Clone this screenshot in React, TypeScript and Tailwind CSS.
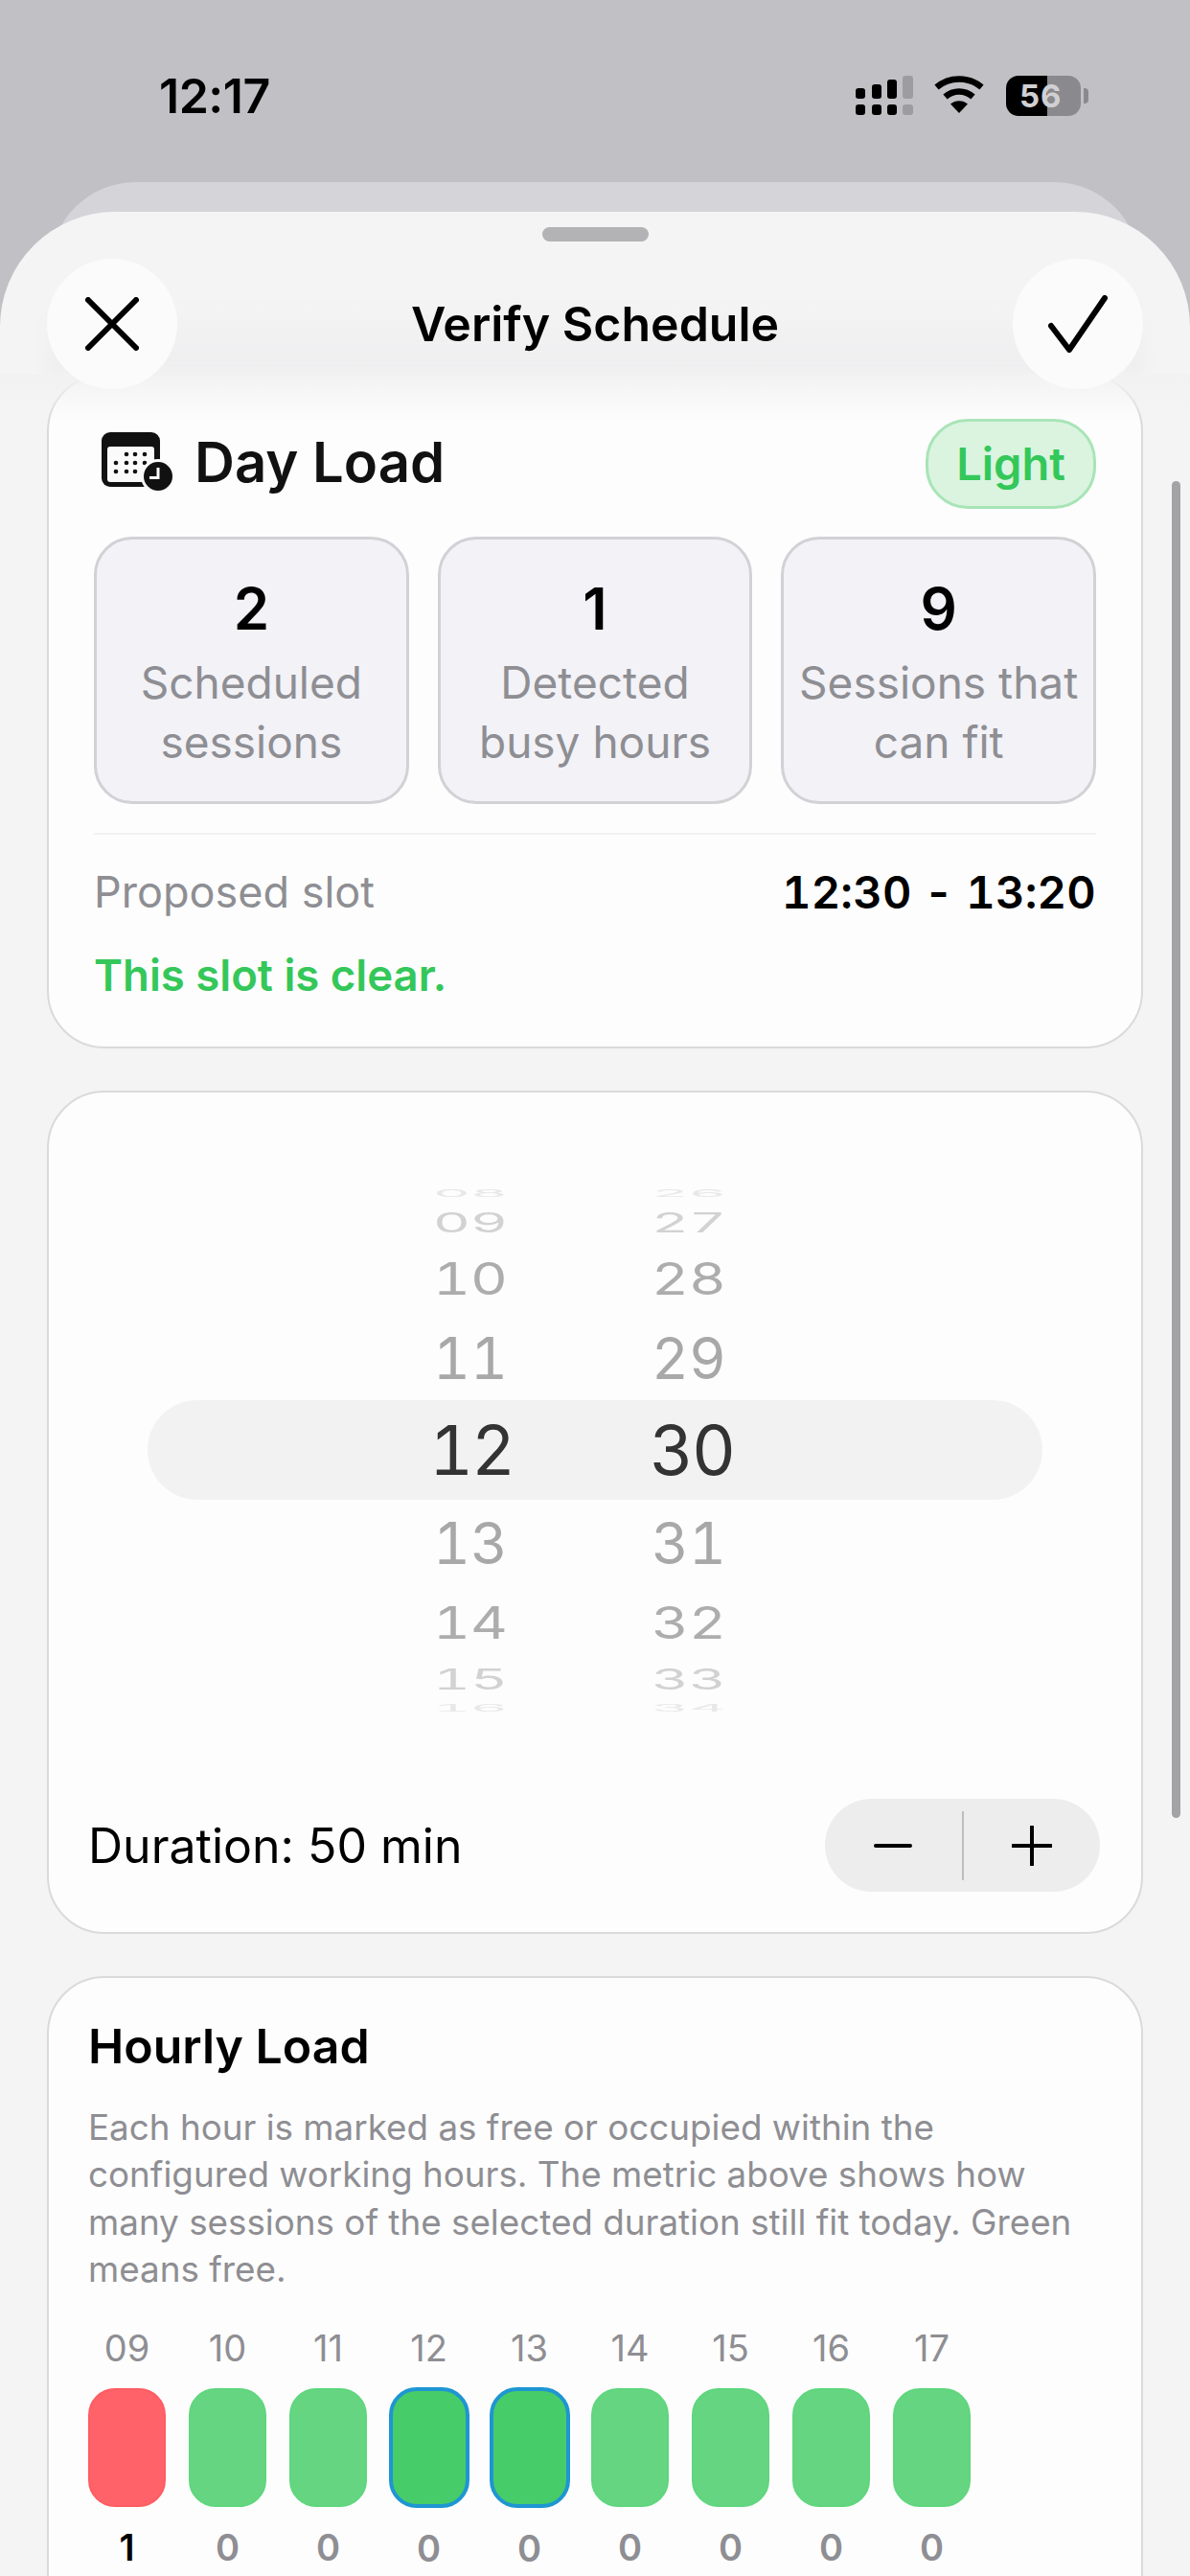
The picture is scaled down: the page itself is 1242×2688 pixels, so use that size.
import React from "react";

const hours = [
  { h: "09", c: "1", kind: "busy" },
  { h: "10", c: "0", kind: "free" },
  { h: "11", c: "0", kind: "free" },
  { h: "12", c: "0", kind: "sel" },
  { h: "13", c: "0", kind: "sel" },
  { h: "14", c: "0", kind: "free" },
  { h: "15", c: "0", kind: "free" },
  { h: "16", c: "0", kind: "free" },
  { h: "17", c: "0", kind: "free" },
];

function Signal() {
  return (
    <svg width="62" height="42" viewBox="0 0 62 42" className="block">
      <g fill="#000">
        <rect x="0" y="13" width="10" height="11" rx="3" />
        <rect x="17" y="9" width="10" height="15" rx="3" />
        <rect x="33" y="4" width="10" height="20" rx="3" />
        <rect x="0" y="30" width="10" height="11" rx="3" />
        <rect x="17" y="30" width="10" height="11" rx="3" />
        <rect x="33" y="30" width="10" height="11" rx="3" />
      </g>
      <g fill="#9d9da0">
        <rect x="49" y="0" width="11" height="24" rx="3" />
        <rect x="49" y="30" width="11" height="11" rx="3" />
      </g>
    </svg>
  );
}

function Wifi() {
  return (
    <svg width="52" height="40" viewBox="0 0 52 40" className="block">
      <path d="M2.5 12 C16 0.5 36 0.5 49.5 12" fill="none" stroke="#000" strokeWidth="6.5" />
      <path d="M11.5 22 C20 14.5 32 14.5 40.5 22" fill="none" stroke="#000" strokeWidth="6.5" />
      <path d="M17 29.5 C22 25 30 25 35 29.5 L26 39 Z" fill="#000" />
    </svg>
  );
}

function CalendarClock() {
  return (
    <svg width="76" height="64" viewBox="0 0 76 64" className="mt-[2px] block shrink-0">
      <rect x="0" y="0" width="61" height="57" rx="9" fill="#111" />
      <rect x="6" y="15" width="49" height="37" rx="3" fill="#fafafa" />
      <g fill="#111">
        <circle cx="26" cy="23" r="2.3" />
        <circle cx="35" cy="23" r="2.3" />
        <circle cx="45" cy="23" r="2.3" />
        <circle cx="15" cy="32" r="2.3" />
        <circle cx="26" cy="32" r="2.3" />
        <circle cx="35" cy="32" r="2.3" />
        <circle cx="45" cy="32" r="2.3" />
        <circle cx="15" cy="41" r="2.3" />
        <circle cx="26" cy="41" r="2.3" />
        <circle cx="35" cy="41" r="2.3" />
      </g>
      <circle cx="59" cy="46" r="18" fill="#fafafa" />
      <circle cx="59" cy="46" r="15" fill="#111" />
      <path d="M59 37 V47.5 H50" fill="none" stroke="#fff" strokeWidth="3" />
    </svg>
  );
}

function Stat({ n, a, b }: { n: string; a: string; b: string }) {
  return (
    <div className="flex h-[279px] flex-col items-center rounded-[40px] border-[3px] border-[#d1d1d6] bg-[#f2f2f7] pt-[36px]">
      <div className="text-[60px] font-semibold leading-[72px] text-black">{n}</div>
      <div className="mt-[10px] text-center text-[46px] leading-[62px] text-[#8e8e93]">
        {a}
        <br />
        {b}
      </div>
    </div>
  );
}

function PickRow({
  a,
  b,
  h,
  size,
  color,
  scale,
  active,
}: {
  a: string;
  b: string;
  h: string;
  size: string;
  color: string;
  scale: string;
  active?: boolean;
}) {
  return (
    <div className={`flex items-center ${h} ${active ? "my-[7px] rounded-[52px] bg-[#f2f2f2]" : ""}`}>
      <span className={`leading-none tabular-nums ${active ? "ml-[294px] w-[230px] tracking-[-2px]" : "ml-[298px] w-[228px]"} ${size} ${color} ${scale}`}>{a}</span>
      <span className={`leading-none tabular-nums ${active ? "tracking-[-2px]" : ""} ${size} ${color} ${scale}`}>{b}</span>
    </div>
  );
}

export default function App() {
  return (
    <div className="relative h-[2688px] w-[1242px] overflow-hidden bg-[#c1c0c5] font-['Inter','Liberation_Sans',sans-serif]">
      {/* Status bar */}
      <div className="flex h-[190px] items-start justify-between pl-[166px] pr-[114px] pt-[72px]">
        <div className="text-[50px] font-semibold leading-[56px] tracking-[-0.5px] text-black">12:17</div>
        <div className="flex items-start pt-[7px]">
          <Signal />
          <div className="ml-[20px]">
            <Wifi />
          </div>
          <div className="relative ml-[23px] flex h-[42px] w-[78px]">
            <div className="h-full w-[43px] rounded-l-[13px] bg-black" />
            <div className="h-full w-[35px] rounded-r-[13px] bg-[#8a8a8e]" />
            <div className="absolute left-[14px] top-0 text-[33px] font-bold leading-[42px] tracking-[1px] text-[#d0d0d2]">56</div>
            <div className="absolute left-[81px] top-[13px] h-[16px] w-[5px] rounded-r-[4px] bg-[#8a8a8e]" />
          </div>
        </div>
      </div>

      {/* Sheet behind */}
      <div className="mx-[52px] -mb-[89px] h-[120px] rounded-t-[90px] bg-[#d5d4d9]" />

      {/* Front sheet */}
      <div className="relative h-[2467px] rounded-t-[120px] bg-[#f4f4f5]">
        <div className="flex justify-center pt-[16px]">
          <div className="h-[15px] w-[111px] rounded-full bg-[#b3b3b5]" />
        </div>

        {/* Header shade */}
        <div className="absolute left-[48px] right-[48px] top-[90px] h-[79px] bg-gradient-to-b from-transparent to-[#eeeeef] blur-[6px]" />

        {/* Header */}
        <div className="relative z-10 mt-[18px] flex items-center justify-between px-[49px]">
          <div className="flex h-[136px] w-[136px] items-center justify-center rounded-full bg-[#fbfbfc]">
            <svg width="56" height="56" viewBox="0 0 56 56">
              <path d="M3 3 L53 53 M53 3 L3 53" stroke="#000" strokeWidth="6" strokeLinecap="round" />
            </svg>
          </div>
          <div className="text-[50px] font-semibold leading-[60px] text-black">Verify Schedule</div>
          <div className="flex h-[136px] w-[136px] items-center justify-center rounded-full bg-[#fbfbfc]">
            <svg width="62" height="60" viewBox="0 0 62 60">
              <path d="M3 32 L22 57 L59 3" fill="none" stroke="#000" strokeWidth="6" strokeLinecap="round" strokeLinejoin="round" />
            </svg>
          </div>
        </div>
        <div className="absolute left-0 right-0 top-[169px] z-[5] h-[50px] bg-gradient-to-b from-[#f2f2f3] to-transparent" />

        {/* Body */}
        <div className="relative -mt-[16px] flex flex-col gap-[44px] px-[49px]">
          {/* Day Load */}
          <div className="h-[704px] rounded-[60px] border-[2px] border-[#dadada] bg-[#fdfdfd] pl-[47px] pr-[47px] pt-[45px]">
            <div className="flex h-[94px] items-start justify-between">
              <div className="ml-[8px] flex items-center pt-[9px]">
                <CalendarClock />
                <div className="ml-[21px] text-[58px] font-semibold leading-[72px] text-[#111]">Day Load</div>
              </div>
              <div className="flex h-[94px] w-[178px] items-center justify-center rounded-[44px] border-[3px] border-[#a8e4b6] bg-[#daf4e0] text-[47px] font-semibold text-[#34c759]">
                Light
              </div>
            </div>
            <div className="mt-[29px] grid grid-cols-3 gap-[30px]">
              <Stat n="2" a="Scheduled" b="sessions" />
              <Stat n="1" a="Detected" b="busy hours" />
              <Stat n="9" a="Sessions that" b="can fit" />
            </div>
            <div className="mt-[30px] h-[2px] bg-[#f1f1f1]" />
            <div className="mt-[31px] flex items-center justify-between">
              <div className="text-[45px] leading-[58px] text-[#8e8e93]">Proposed slot</div>
              <div className="text-[47px] font-semibold leading-[58px] tracking-[0.3px] text-black tabular-nums">12:30 - 13:20</div>
            </div>
            <div className="mt-[29px] text-[45.5px] font-semibold leading-[58px] text-[#34c759]">This slot is clear.</div>
          </div>

          {/* Picker */}
          <div className="h-[880px] rounded-[60px] border-[2px] border-[#dadada] bg-[#fdfdfd] pt-[90px]">
            <div className="mx-[103px]">
              <PickRow a="08" b="26" h="h-[30px]" size="text-[60px]" color="text-[#e8e8e8]" scale="scale-y-[0.18]" />
              <PickRow a="09" b="27" h="h-[29px]" size="text-[60px]" color="text-[#d2d2d2]" scale="scale-y-[0.48]" />
              <PickRow a="10" b="28" h="h-[90px]" size="text-[60px]" color="text-[#adadad]" scale="scale-y-[0.78]" />
              <PickRow a="11" b="29" h="h-[75px]" size="text-[60px]" color="text-[#a8a8a8]" scale="scale-y-100" />
              <PickRow a="12" b="30" h="h-[104px]" size="text-[71px]" color="text-[#333333]" scale="scale-y-100" active />
              <PickRow a="13" b="31" h="h-[76px]" size="text-[60px]" color="text-[#a8a8a8]" scale="scale-y-100" />
              <PickRow a="14" b="32" h="h-[90px]" size="text-[60px]" color="text-[#adadad]" scale="scale-y-[0.78]" />
              <PickRow a="15" b="33" h="h-[28px]" size="text-[60px]" color="text-[#d2d2d2]" scale="scale-y-[0.5]" />
              <PickRow a="16" b="34" h="h-[31px]" size="text-[60px]" color="text-[#e8e8e8]" scale="scale-y-[0.16]" />
            </div>
            <div className="mt-[80px] flex items-center justify-between pl-[41px] pr-[43px]">
              <div className="text-[50px] leading-[60px] text-black">Duration: 50 min</div>
              <div className="flex h-[97px] w-[287px] items-center rounded-full bg-[#ededed]">
                <div className="flex flex-1 items-center justify-center">
                  <div className="h-[4px] w-[40px] rounded-full bg-black" />
                </div>
                <div className="h-[72px] w-[2px] bg-[#bdbdbd]" />
                <div className="flex flex-1 items-center justify-center">
                  <svg width="42" height="42" viewBox="0 0 42 42">
                    <path d="M21 1 V41 M1 21 H41" stroke="#000" strokeWidth="4" strokeLinecap="round" />
                  </svg>
                </div>
              </div>
            </div>
          </div>

          {/* Hourly Load */}
          <div className="h-[800px] rounded-[60px] border-[2px] border-[#dadada] bg-[#fdfdfd] pl-[41px] pr-[43px] pt-[41px]">
            <div className="text-[50px] font-semibold leading-[60px] text-black">Hourly Load</div>
            <div className="mt-[30px] text-[36.8px] leading-[49.3px] text-[#8e8e93]">
              Each hour is marked as free or occupied within the configured working hours. The metric above shows how many sessions of the selected duration still fit today. Green means free.
            </div>
            <div className="mt-[35px] flex gap-[24px]">
              {hours.map((x) => (
                <div key={x.h} className="flex w-[81px] flex-col items-center">
                  <div className="text-[38px] leading-[46px] text-[#8e8e93]">{x.h}</div>
                  <div
                    className={
                      x.kind === "busy"
                        ? "mt-[19px] h-[124px] w-[81px] rounded-[28px] border-[2px] border-[#ff5c63] bg-[#ff6369]"
                        : x.kind === "sel"
                          ? "-mx-[2px] mt-[18px] h-[126px] w-[84px] rounded-[29px] border-[4px] border-[#1e96d2] bg-[#47cc6a]"
                          : "mt-[19px] h-[124px] w-[81px] rounded-[28px] border-[2px] border-[#5fd67e] bg-[#65d581]"
                    }
                  />
                  <div className={`mt-[19px] text-[38px] font-semibold leading-[46px] ${x.c === "1" ? "text-black" : "text-[#8e8e93]"}`}>{x.c}</div>
                </div>
              ))}
            </div>
          </div>
        </div>

        {/* Scroll indicator */}
        <div className="absolute right-[10px] top-[281px] z-20 h-[1395px] w-[9px] rounded-full bg-[#a3a3a5]" />
      </div>
    </div>
  );
}
